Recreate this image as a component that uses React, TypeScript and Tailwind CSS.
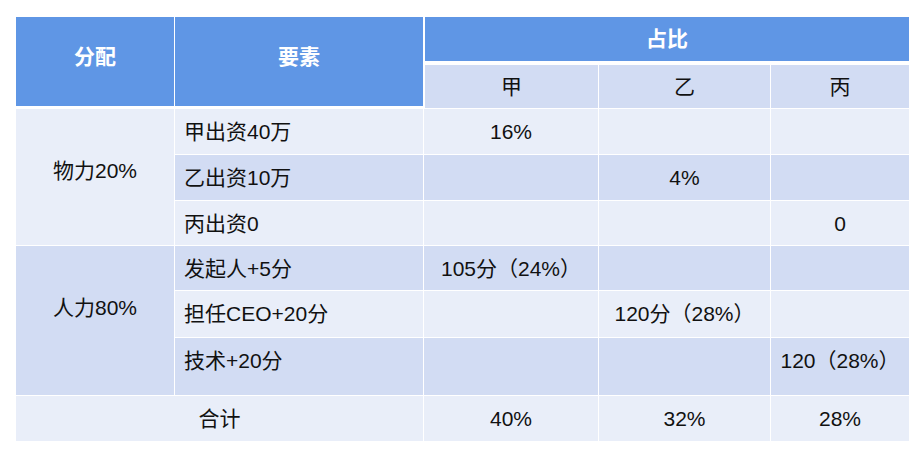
const LIGHT = "bg-[#e9eef9]";
const DARK = "bg-[#d2dcf3]";

type Row = {
  label: string;
  cells: [string, string, string];
  band: "light" | "dark";
  tall?: boolean;
};

const GROUPS: { name: string; band: "light" | "dark"; rows: Row[] }[] = [
  {
    name: "物力20%",
    band: "light",
    rows: [
      { label: "甲出资40万", cells: ["16%", "", ""], band: "light" },
      { label: "乙出资10万", cells: ["", "4%", ""], band: "dark" },
      { label: "丙出资0", cells: ["", "", "0"], band: "light" },
    ],
  },
  {
    name: "人力80%",
    band: "dark",
    rows: [
      { label: "发起人+5分", cells: ["105分（24%）", "", ""], band: "dark" },
      { label: "担任CEO+20分", cells: ["", "120分（28%）", ""], band: "light" },
      { label: "技术+20分", cells: ["", "", "120（28%）"], band: "dark", tall: true },
    ],
  },
];

export default function App() {
  return (
    <div className="min-h-screen bg-white pt-[17px] pl-[16px] font-['Liberation_Sans','Noto_Sans_CJK_SC',sans-serif] text-[21px] text-[#111]">
      <div className="grid grid-cols-[158px_248px_174px_171px_138px] grid-rows-[44px_46px_45px_45px_44px_44px_46px_57px_45px] gap-px bg-white w-[893px]">
        {/* header */}
        <div className="row-span-2 mb-[2px] bg-[#5f96e5] text-white font-bold flex items-start justify-center">
          <div className="h-[80px] flex items-center">分配</div>
        </div>
        <div className="row-span-2 mb-[2px] bg-[#5f96e5] text-white font-bold flex items-start justify-center">
          <div className="h-[80px] flex items-center">要素</div>
        </div>
        <div className="col-span-3 ml-px bg-[#5f96e5] text-white font-bold flex items-center justify-center">
          占比
        </div>
        <div className={`ml-px mt-[3px] ${DARK} flex items-center justify-center`}>甲</div>
        <div className={`mt-[3px] ${DARK} flex items-center justify-center`}>乙</div>
        <div className={`mt-[3px] ${DARK} flex items-center justify-center`}>丙</div>

        {/* body */}
        {GROUPS.map((g) => [
          <div
            key={g.name}
            className={`row-span-3 ${g.band === "light" ? LIGHT : DARK} flex items-start justify-center`}
          >
            <div className="h-[123px] flex items-center">{g.name}</div>
          </div>,
          ...g.rows.flatMap((r) => {
            const bg = r.band === "light" ? LIGHT : DARK;
            return [
              <div key={r.label} className={`${bg} pl-[9px]`}>
                <div className="h-[45px] flex items-center whitespace-nowrap">{r.label}</div>
              </div>,
              ...r.cells.map((c, i) => (
                <div key={r.label + i} className={`${bg} flex justify-center`}>
                  <div className="h-[45px] flex items-center whitespace-nowrap">{c}</div>
                </div>
              )),
            ];
          }),
        ])}

        {/* total */}
        <div className={`col-span-2 ${LIGHT} flex items-center justify-center`}>合计</div>
        <div className={`${LIGHT} flex items-center justify-center`}>40%</div>
        <div className={`${LIGHT} flex items-center justify-center`}>32%</div>
        <div className={`${LIGHT} flex items-center justify-center`}>28%</div>
      </div>
    </div>
  );
}
